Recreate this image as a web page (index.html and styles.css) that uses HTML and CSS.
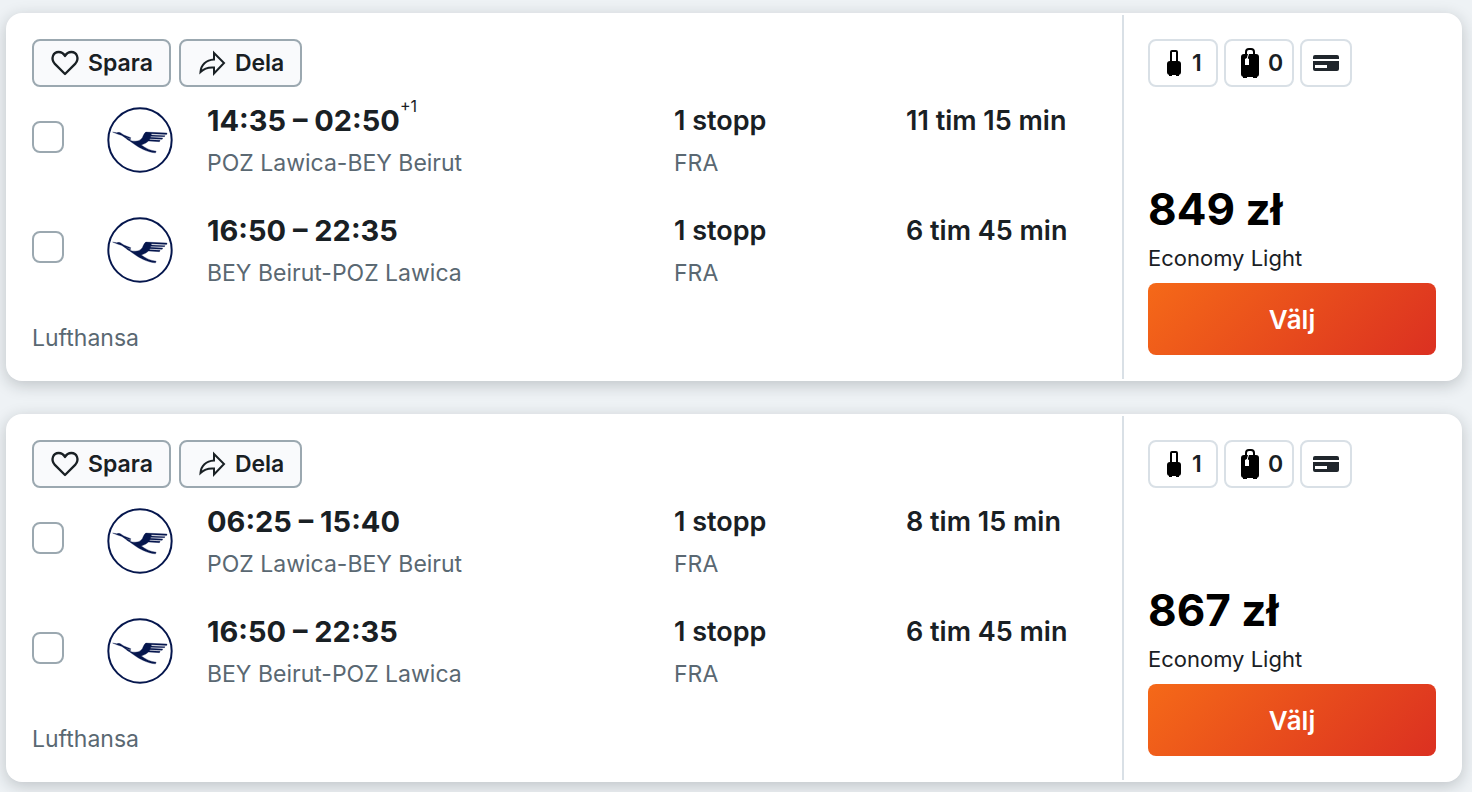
FILE: index.html
```
<!DOCTYPE html>
<html lang="sv">
<head>
    <meta charset="UTF-8">
    <meta name="viewport" content="width=device-width, initial-scale=1.0">
    <title>Flyg</title>
    <link rel="stylesheet" href="styles.css">
</head>
<body>
    <svg class="sprite" aria-hidden="true">
        <symbol id="heart" viewBox="0 0 28 26">
            <path d="M14 24 L3.6 13.6 C-.6 8.5 2.2 2 7.6 2 C10.4 2 12.6 3.4 14 6 C15.4 3.4 17.6 2 20.4 2 C25.8 2 28.6 8.5 24.4 13.6 Z" fill="none" stroke="currentColor" stroke-width="2.3" stroke-linejoin="round"/>
        </symbol>
        <symbol id="share" viewBox="0 0 28 26">
            <path d="M16 3 L26 13 L16 23.5 V17.5 C10 17 6 18.5 2.5 22 C3 15 8 10 16 9.5 Z" fill="none" stroke="currentColor" stroke-width="2" stroke-linejoin="miter"/>
        </symbol>
        <symbol id="crane" viewBox="20 20 200 200">
            <circle cx="120" cy="120" r="96" fill="#fff" stroke="#05164d" stroke-width="6"/>
            <path d="M37 96 L49 98 Q57 95 64 100 L71 105 L92 113 L91 116 L76 111 L92 119 L90 121 L80 118 L96 123 C112 125 121 122 127 113 Q133 98 138 96 L202 99 L201 103 L155 101 L154 105 L196 107 L194 110 L153 109 L152 112 L189 114 L187 118 L150 116 L149 119 L181 121 L179 125 L146 123 Q138 131 124 135 C137 145 151 152 169 154 L167 159 C142 157 120 145 103 133 L65 106 L52 102 Z" fill="#05164d" stroke="#05164d"/>
        </symbol>
        <symbol id="cabin-bag" viewBox="0 0 16 28">
            <path d="M5 13 V3 Q5 2 6 2 H10 Q11 2 11 3 V13" fill="none" stroke="#000" stroke-width="2"/>
            <rect x="1" y="12" width="14" height="14" rx="3"/>
            <path d="M3 25 h3 v2 h-3 z M10 25 h3 v2 h-3 z"/>
        </symbol>
        <symbol id="checked-bag" viewBox="0 0 20 32">
            <path d="M6 8 V5 Q6 2 9 2 H11 Q14 2 14 5 V8" fill="none" stroke="#000" stroke-width="2"/>
            <rect x="1" y="7" width="18" height="23" rx="3"/>
            <path d="M3 29 h4 v2 h-4 z M13 29 h4 v2 h-4 z"/>
            <path d="M8.500 7 L7 12" stroke="#fff"/>
            <path d="M5 12 L7 11 L9 12 V18 H5 Z" fill="#fff"/>
        </symbol>
        <symbol id="card" viewBox="0 0 26 16">
            <path d="M2 0 H24 Q26 0 26 2 V4 H0 V2 Q0 0 2 0 Z M0 6 H26 V14 Q26 16 24 16 H2 Q0 16 0 14 Z"/>
            <path d="M2 10 h12 v3 h-12 z" fill="#fff"/>
        </symbol>
    </svg>

    <main class="results">
        <article class="card">
            <div class="flight">
                <div class="actions">
                    <button class="action" type="button"><svg><use href="#heart"/></svg>Spara</button>
                    <button class="action" type="button"><svg><use href="#share"/></svg>Dela</button>
                </div>
                <div class="legs">
                    <div class="leg">
                        <input class="check" type="checkbox" aria-label="14:35 – 02:50">
                        <svg class="logo"><use href="#crane"/></svg>
                        <div>
                            <div class="time">14:35 – 02:50<sup>+1</sup></div>
                            <div class="sub">POZ Lawica-BEY Beirut</div>
                        </div>
                        <div>
                            <div class="info">1 stopp</div>
                            <div class="sub">FRA</div>
                        </div>
                        <div class="info">11 tim 15 min</div>
                    </div>
                    <div class="leg">
                        <input class="check" type="checkbox" aria-label="16:50 – 22:35">
                        <svg class="logo"><use href="#crane"/></svg>
                        <div>
                            <div class="time">16:50 – 22:35</div>
                            <div class="sub">BEY Beirut-POZ Lawica</div>
                        </div>
                        <div>
                            <div class="info">1 stopp</div>
                            <div class="sub">FRA</div>
                        </div>
                        <div class="info">6 tim 45 min</div>
                    </div>
                </div>
                <div class="airline">Lufthansa</div>
            </div>
            <aside class="offer">
                <div class="bags">
                    <span class="bag"><svg class="luggage"><use href="#cabin-bag"/></svg>1</span>
                    <span class="bag"><svg class="luggage"><use href="#checked-bag"/></svg>0</span>
                    <span class="bag pay"><svg class="credit"><use href="#card"/></svg></span>
                </div>
                <div class="price">849 zł</div>
                <div class="fare">Economy Light</div>
                <button class="select" type="button">Välj</button>
            </aside>
        </article>

        <article class="card">
            <div class="flight">
                <div class="actions">
                    <button class="action" type="button"><svg><use href="#heart"/></svg>Spara</button>
                    <button class="action" type="button"><svg><use href="#share"/></svg>Dela</button>
                </div>
                <div class="legs">
                    <div class="leg">
                        <input class="check" type="checkbox" aria-label="06:25 – 15:40">
                        <svg class="logo"><use href="#crane"/></svg>
                        <div>
                            <div class="time">06:25 – 15:40</div>
                            <div class="sub">POZ Lawica-BEY Beirut</div>
                        </div>
                        <div>
                            <div class="info">1 stopp</div>
                            <div class="sub">FRA</div>
                        </div>
                        <div class="info">8 tim 15 min</div>
                    </div>
                    <div class="leg">
                        <input class="check" type="checkbox" aria-label="16:50 – 22:35">
                        <svg class="logo"><use href="#crane"/></svg>
                        <div>
                            <div class="time">16:50 – 22:35</div>
                            <div class="sub">BEY Beirut-POZ Lawica</div>
                        </div>
                        <div>
                            <div class="info">1 stopp</div>
                            <div class="sub">FRA</div>
                        </div>
                        <div class="info">6 tim 45 min</div>
                    </div>
                </div>
                <div class="airline">Lufthansa</div>
            </div>
            <aside class="offer">
                <div class="bags">
                    <span class="bag"><svg class="luggage"><use href="#cabin-bag"/></svg>1</span>
                    <span class="bag"><svg class="luggage"><use href="#checked-bag"/></svg>0</span>
                    <span class="bag pay"><svg class="credit"><use href="#card"/></svg></span>
                </div>
                <div class="price">867 zł</div>
                <div class="fare">Economy Light</div>
                <button class="select" type="button">Välj</button>
            </aside>
        </article>
    </main>
</body>
</html>
```
FILE: styles.css
```
*{
    box-sizing: border-box;
}
body{
    margin: 0;
    background: #eef2f5;
    color: #192024;
    font-family: Inter, "Liberation Sans", sans-serif;
}
button{
    font-family: inherit;
    cursor: pointer;
}
.sprite{
    display: none;
}
.results{
    display: flex;
    flex-direction: column;
    gap: 33px;
    padding: 13px 10px 10px 6px;
}
.card{
    display: flex;
    padding: 2px 0;
    border-radius: 16px;
    background: #fff;
    box-shadow: 0 4px 16px rgba(25, 32, 36, 0.22);
}
.flight{
    flex: 1;
    padding: 24px 26px;
}
.actions{
    display: flex;
    gap: 8px;
}
.action{
    display: flex;
    align-items: center;
    gap: 8px;
    height: 48px;
    padding: 0 16px;
    border: 2px solid #9ba8b0;
    border-radius: 8px;
    background: #f9fafc;
    color: #192024;
    font-size: 23px;
    font-weight: 600;
}
.action svg{
    width: 30px;
    height: 26px;
}
.legs{
    display: flex;
    flex-direction: column;
    gap: 22px;
    margin-top: 9px;
}
.leg{
    display: grid;
    grid-template-columns: 75px 100px 467fr 232fr 190fr;
    height: 88px;
    padding-top: 4px;
}
.check{
    appearance: none;
    width: 32px;
    height: 32px;
    margin: 21px 0 0;
    border: 2px solid #9ba8b0;
    border-radius: 8px;
    background: #fff;
}
.check:checked{
    background: #192024;
}
.logo{
    width: 66px;
    height: 66px;
    margin-top: 7px;
}
.time, .info, .sub{
    line-height: 42px;
    white-space: nowrap;
}
.time{
    display: flex;
    font-size: 29px;
    font-weight: 700;
}
.time sup{
    font-size: 16px;
    font-weight: 400;
    line-height: 12px;
}
.info{
    font-size: 27px;
    font-weight: 600;
}
.sub, .airline{
    color: #5a6872;
    font-size: 23px;
}
.airline{
    margin-top: 28px;
    line-height: 33px;
}
.offer{
    display: flex;
    flex-direction: column;
    width: 340px;
    padding: 24px 26px 24px 24px;
    border-left: 2px solid #d9e0e6;
}
.bags{
    display: flex;
    gap: 6px;
    margin-bottom: auto;
}
.bag{
    display: flex;
    align-items: center;
    gap: 8px;
    width: 70px;
    height: 48px;
    padding-left: 14px;
    border: 2px solid #d9e0e6;
    border-radius: 8px;
    font-size: 23px;
    font-weight: 600;
}
.pay{
    justify-content: center;
    width: 52px;
    padding: 0;
}
.luggage{
    flex: none;
    width: 20px;
    height: 32px;
}
.luggage:has([href="#cabin-bag"]){
    height: 28px;
}
.credit{
    width: 26px;
    height: 16px;
    fill: #20262c;
}
.price{
    color: #000;
    font-size: 44px;
    font-weight: 700;
    line-height: 64px;
}
.fare{
    font-size: 22px;
    line-height: 34px;
}
.select{
    height: 72px;
    margin-top: 8px;
    border: 0;
    border-radius: 8px;
    background: linear-gradient(135deg, #f56918, #db3021);
    color: #fff;
    font-size: 26px;
    font-weight: 600;
}
```
